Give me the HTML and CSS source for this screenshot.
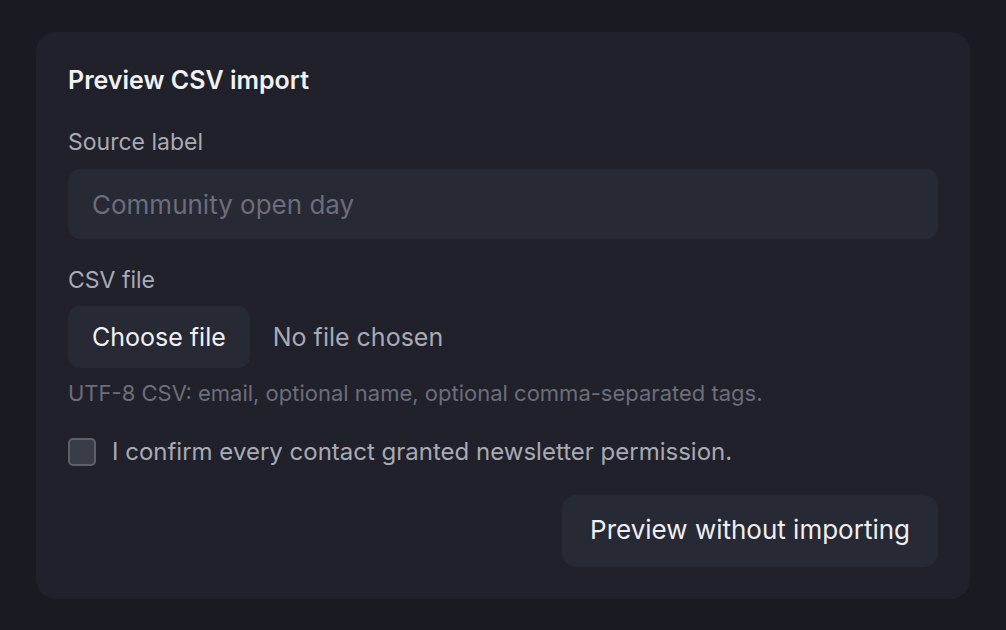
FILE: index.html
```html
<!DOCTYPE html>
<html lang="en">
<head>
    <meta charset="UTF-8">
    <meta name="viewport" content="width=device-width, initial-scale=1.0">
    <title>Preview CSV import</title>
    <link rel="stylesheet" href="styles.css">
</head>
<body>
    <section class="card">
        <h2 class="card-title">Preview CSV import</h2>
        <form class="import-form" action="#" method="post">
            <div class="field">
                <label class="field-label" for="source">Source label</label>
                <input class="text-input" type="text" id="source" name="source" placeholder="Community open day">
            </div>
            <div class="field">
                <span class="field-label">CSV file</span>
                <div class="file-row">
                    <label class="file-button" for="csv">Choose file</label>
                    <span class="file-name">No file chosen</span>
                    <input class="file-input" type="file" id="csv" name="csv" accept=".csv">
                </div>
                <p class="hint">UTF-8 CSV: email, optional name, optional comma-separated tags.</p>
            </div>
            <label class="check-row">
                <input class="checkbox" type="checkbox" name="consent">
                <span>I confirm every contact granted newsletter permission.</span>
            </label>
            <div class="actions">
                <button type="submit" class="btn">Preview without importing</button>
            </div>
        </form>
    </section>
</body>
</html>
```

FILE: styles.css
```css
body {
    margin: 0;
    padding: 32px 36px;
    background-color: #1a1b22;
    font-family: Inter, "Noto Sans", sans-serif;
    color: #e9e9ee;
}

.card {
    background-color: #20212a;
    border-radius: 20px;
    padding: 32px;
}

.card-title {
    margin: 0 0 30px;
    font-size: 25px;
    font-weight: 600;
    line-height: 33px;
    color: #f1f1f5;
}

.import-form {
    display: flex;
    flex-direction: column;
}

.field {
    display: flex;
    flex-direction: column;
    gap: 12px;
    margin-bottom: 26px;
}

.field-label {
    font-size: 23px;
    line-height: 30px;
    color: #a8aab5;
}

.text-input {
    box-sizing: border-box;
    height: 70px;
    padding: 0 24px;
    border: none;
    border-radius: 12px;
    background-color: #272935;
    font-family: inherit;
    font-size: 26px;
    color: #e9e9ee;
    outline: none;
}

.text-input::placeholder {
    color: #6c6e7b;
}

.file-row {
    display: flex;
    align-items: center;
    gap: 23px;
    margin-top: -1px;
}

.file-button {
    display: inline-flex;
    align-items: center;
    height: 62px;
    padding: 0 24px;
    border-radius: 12px;
    background-color: #272935;
    font-size: 25px;
    color: #f1f1f5;
    cursor: pointer;
}

.file-name {
    font-size: 25px;
    color: #a8aab5;
}

.file-input {
    display: none;
}

.hint {
    margin: -2px 0 0;
    font-size: 22px;
    line-height: 30px;
    color: #6c6e7b;
}

.check-row {
    display: flex;
    align-items: center;
    gap: 16px;
    font-size: 24px;
    line-height: 36px;
    color: #a8aab5;
    margin-bottom: 25px;
}

.checkbox {
    appearance: none;
    box-sizing: border-box;
    flex-shrink: 0;
    margin: 0;
    width: 28px;
    height: 28px;
    border: 2px solid #5d5f6b;
    border-radius: 5px;
    background-color: #393b46;
}

.actions {
    display: flex;
    justify-content: flex-end;
}

.btn {
    height: 72px;
    padding: 0 28px 4px;
    border: none;
    border-radius: 14px;
    background-color: #272935;
    font-family: inherit;
    font-size: 26px;
    color: #eeeef3;
    cursor: pointer;
}

.btn:hover {
    background-color: #2e303d;
}
```
